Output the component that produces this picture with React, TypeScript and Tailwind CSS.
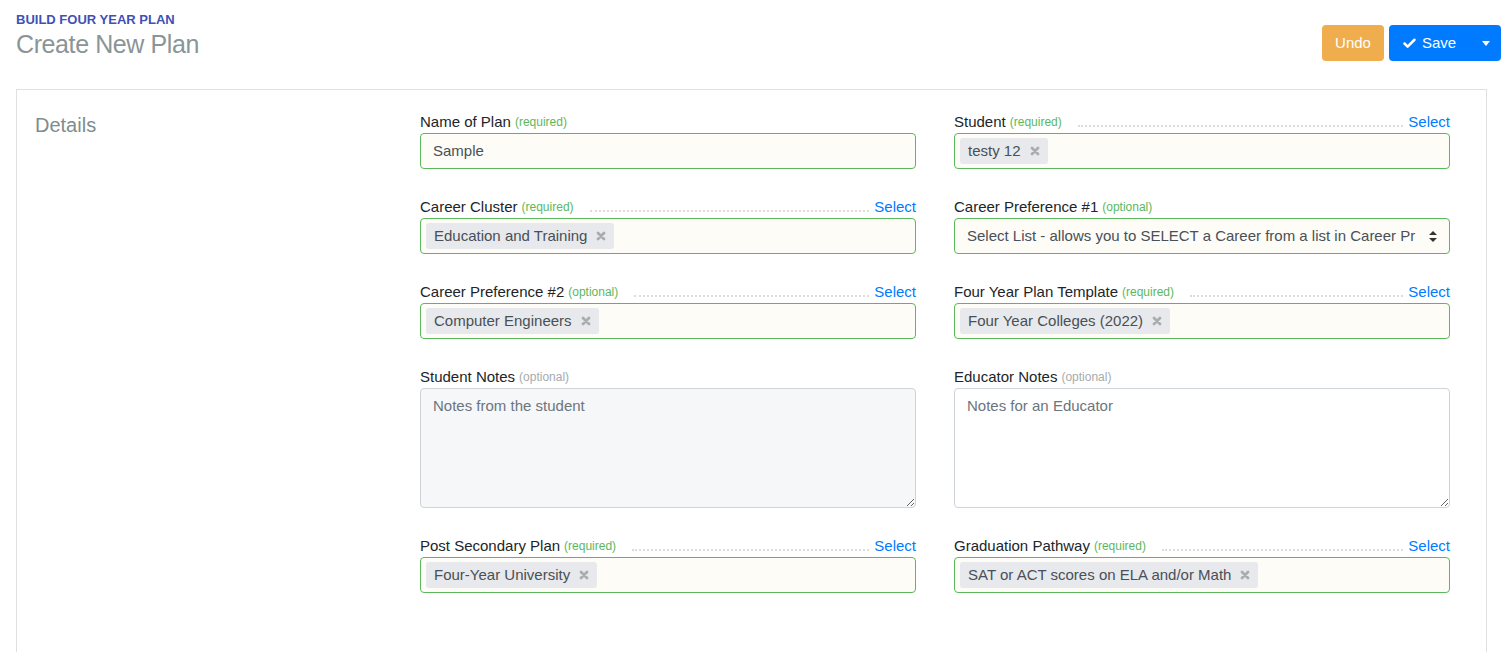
import { Check } from "lucide-react"

const font = { fontFamily: '"Liberation Sans", Arial, sans-serif' }

function Label({ text, note, select }: { text: string; note: string; select?: boolean }) {
  return (
    <div className="flex items-center h-[20px] mb-[1px]">
      <span className="text-[15px] text-[#212529] whitespace-nowrap">{text}</span>
      <span className="ml-[4px] text-[12px] text-[#5cb85c] whitespace-nowrap">{note}</span>
      {select && (
        <>
          <div className="flex-1 ml-[16px] mr-[5px] mt-[7px] border-b-2 border-dotted border-[#dcdcdc]" />
          <span className="text-[15px] text-[#007bff] whitespace-nowrap">Select</span>
        </>
      )}
    </div>
  )
}

function Chip({ text }: { text: string }) {
  return (
    <span className="inline-flex items-center h-[26px] px-[8px] rounded-[3px] bg-[#e7e9ec] text-[15px] text-[#495057] whitespace-nowrap">
      {text}
      <svg className="ml-[9px]" width="10" height="10" viewBox="0 0 10 10">
        <path d="M2 2 L8 8 M8 2 L2 8" stroke="#a9adb1" strokeWidth="2.8" strokeLinecap="round" />
      </svg>
    </span>
  )
}

function ChipInput({ chip }: { chip: string }) {
  return (
    <div className="h-[36px] flex items-center px-[5px] border border-[#5cb85c] rounded-[4px] bg-[#fdfcf7]">
      <Chip text={chip} />
    </div>
  )
}

function PlainLabel({ text }: { text: string }) {
  return (
    <div className="flex items-center h-[20px] mb-[1px]">
      <span className="text-[15px] text-[#212529]">{text}</span>
      <span className="ml-[4px] text-[12px] text-[#a6abaf]">(optional)</span>
    </div>
  )
}

export default function App() {
  return (
    <div className="min-h-[652px] bg-white overflow-hidden" style={font}>
      {/* Header */}
      <div className="flex justify-between pl-[16px] pr-[11px] pt-[12px] h-[89px]">
        <div>
          <div className="text-[13px] font-bold text-[#3f51b5] leading-[16px]">BUILD FOUR YEAR PLAN</div>
          <div className="mt-[1px] text-[25px] text-[#8a9597] leading-[30px] tracking-[-0.4px]">Create New Plan</div>
        </div>
        <div className="flex gap-[5px] mt-[13px]">
          <button className="h-[36px] w-[62px] rounded-[4px] bg-[#f0ad4e] text-white text-[15px]">Undo</button>
          <div className="h-[36px] w-[112px] rounded-[4px] bg-[#007bff] text-white text-[15px] flex items-center">
            <span className="flex items-center pl-[13px]">
              <Check className="w-[15px] h-[15px] mr-[5px]" strokeWidth={4} />
              Save
            </span>
            <span className="ml-auto mr-[11px] w-0 h-0 border-l-[4px] border-r-[4px] border-t-[5px] border-l-transparent border-r-transparent border-t-white" />
          </div>
        </div>
      </div>

      {/* Card */}
      <div className="ml-[16px] w-[1471px] border border-[#e0e0e0] border-b-0 min-h-[563px] flex pl-[18px] pt-[21px]">
        <div className="w-[385px] shrink-0 text-[20px] text-[#7f8c8d] leading-[28px]">Details</div>
        <div className="mt-[1px] w-[1030px] grid grid-cols-2 gap-x-[38px] gap-y-[28px] content-start">
          <div>
            <Label text="Name of Plan" note="(required)" />
            <div className="h-[36px] flex items-center px-[12px] border border-[#5cb85c] rounded-[4px] bg-[#fdfcf7] text-[15px] text-[#495057]">Sample</div>
          </div>
          <div>
            <Label text="Student" note="(required)" select />
            <ChipInput chip="testy 12" />
          </div>

          <div>
            <Label text="Career Cluster" note="(required)" select />
            <ChipInput chip="Education and Training" />
          </div>
          <div>
            <Label text="Career Preference #1" note="(optional)" />
            <div className="h-[36px] flex items-center pl-[12px] pr-[12px] border border-[#5cb85c] rounded-[4px] bg-[#fdfcf7] text-[15px] text-[#495057]">
              <span className="flex-1 overflow-hidden whitespace-nowrap">Select List - allows you to SELECT a Career from a list in Career Pr</span>
              <svg className="ml-[6px] shrink-0" width="8" height="11" viewBox="0 0 8 11">
                <path d="M4 0 L8 4 L0 4 Z M4 11 L8 7 L0 7 Z" fill="#333" />
              </svg>
            </div>
          </div>

          <div>
            <Label text="Career Preference #2" note="(optional)" select />
            <ChipInput chip="Computer Engineers" />
          </div>
          <div>
            <Label text="Four Year Plan Template" note="(required)" select />
            <ChipInput chip="Four Year Colleges (2022)" />
          </div>

          <div>
            <PlainLabel text="Student Notes" />
            <textarea
              readOnly
              placeholder="Notes from the student"
              className="block w-full h-[120px] px-[12px] py-[6px] border border-[#ced4da] rounded-[4px] bg-[#f5f7f9] text-[15px] text-[#495057] placeholder:text-[#6c757d] resize-y outline-none"
            />
          </div>
          <div>
            <PlainLabel text="Educator Notes" />
            <textarea
              readOnly
              placeholder="Notes for an Educator"
              className="block w-full h-[120px] px-[12px] py-[6px] border border-[#ced4da] rounded-[4px] bg-white text-[15px] text-[#495057] placeholder:text-[#6c757d] resize-y outline-none"
            />
          </div>

          <div>
            <Label text="Post Secondary Plan" note="(required)" select />
            <ChipInput chip="Four-Year University" />
          </div>
          <div>
            <Label text="Graduation Pathway" note="(required)" select />
            <ChipInput chip="SAT or ACT scores on ELA and/or Math" />
          </div>
        </div>
      </div>
    </div>
  )
}
